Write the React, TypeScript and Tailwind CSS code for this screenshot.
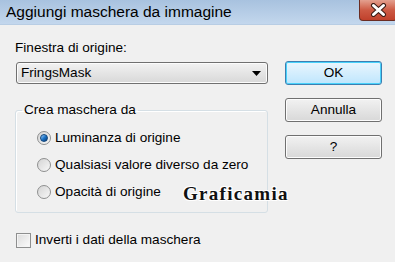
import React from "react";

const font = { fontFamily: '"Liberation Sans", Arial, sans-serif' };

function WinButton({ label, focused }: { label: string; focused?: boolean }) {
  return (
    <button
      className={`flex h-[24px] w-[97px] items-center justify-center rounded-[3px] border text-[13.6px] text-black ${
        focused
          ? "border-[#3c7fb1] bg-gradient-to-b from-[#eaf6fd] to-[#bee6fd] shadow-[inset_0_0_0_1px_#48d2fb]"
          : "border-[#707070] bg-gradient-to-b from-[#f2f2f2] to-[#d8d8d8] shadow-[inset_0_0_0_1px_#fcfcfc]"
      }`}
    >
      {label}
    </button>
  );
}

function Radio({ label, checked }: { label: string; checked?: boolean }) {
  return (
    <div className="flex h-[16px] items-center">
      <span className="flex h-[14px] w-[14px] items-center justify-center rounded-full border border-[#8e8f8f] bg-gradient-to-br from-[#d4d4d4] to-[#f8f8f8]">
        {checked && (
          <span className="h-[8px] w-[8px] rounded-full border border-[#12467a] bg-gradient-to-br from-[#9ed4ff] via-[#1b75c8] to-[#0b3a78]" />
        )}
      </span>
      <span className="ml-[4px] text-[13.6px] leading-[16px] text-black">{label}</span>
    </div>
  );
}

export default function App() {
  return (
    <div className="h-[262px] w-[395px] overflow-hidden bg-[#f0f0f0]" style={font}>
      {/* title bar */}
      <div className="flex h-[25px] items-start justify-between bg-gradient-to-b from-[#a8c2df] to-[#c3d7ed] border-b border-[#b8cde4]">
        <span className="ml-[6px] mt-[3px] text-[15.5px] leading-[18px] text-black">
          Aggiungi maschera da immagine
        </span>
        <div className="mr-[-2px] flex h-[21px] w-[38px] items-center justify-center rounded-b-[4px] border border-t-0 border-[#6a2c22] bg-gradient-to-b from-[#e3a08f] via-[#cd5a44] to-[#c0402b]">
          <svg width="17" height="14" viewBox="0 0 17 14">
            <path
              d="M3.5 2.5 L13.5 11.5 M13.5 2.5 L3.5 11.5"
              stroke="#3a1a14"
              strokeWidth="5"
              strokeLinecap="round"
            />
            <path
              d="M3.5 2.5 L13.5 11.5 M13.5 2.5 L3.5 11.5"
              stroke="#ffffff"
              strokeWidth="3"
              strokeLinecap="round"
            />
          </svg>
        </div>
      </div>

      <div className="relative flex">
        {/* left column */}
        <div className="ml-[15px] w-[253px]">
          <div className="mt-[15px] text-[13.6px] leading-[16px] text-black">Finestra di origine:</div>
          <div className="ml-[1px] mt-[6px] flex h-[22px] w-[252px] items-center justify-between rounded-[3px] border border-[#707070] bg-gradient-to-b from-[#f2f2f2] to-[#d8d8d8] shadow-[inset_0_0_0_1px_#fcfcfc]">
            <span className="ml-[4px] text-[13.6px] text-black">FringsMask</span>
            <svg width="9" height="5" viewBox="0 0 9 5" className="mr-[6px]">
              <path d="M0 0 H9 L4.5 5 Z" fill="#000" />
            </svg>
          </div>

          <fieldset className="mt-[18px] h-[111px] rounded-[3px] border border-[#d5dfe5] shadow-[inset_1px_1px_0_#ffffff]">
            <legend className="ml-[6px] px-[2px] text-[13.6px] leading-[16px] text-black">
              Crea maschera da
            </legend>
            <div className="ml-[21px] mt-[12px] flex flex-col gap-[11px]">
              <Radio label="Luminanza di origine" checked />
              <Radio label="Qualsiasi valore diverso da zero" />
              <Radio label="Opacità di origine" />
            </div>
          </fieldset>

          <div className="mt-[19px] flex items-center">
            <span className="ml-[1px] h-[15px] w-[15px] border border-[#8e8f8f] bg-gradient-to-br from-[#dcdcdc] to-[#fbfbfb] shadow-[inset_0_0_0_1px_#f4f4f4]" />
            <span className="ml-[4px] text-[13.6px] leading-[16px] text-black">
              Inverti i dati della maschera
            </span>
          </div>
        </div>

        {/* right column */}
        <div className="ml-[17px] mt-[36px] flex flex-col gap-[13px]">
          <WinButton label="OK" focused />
          <WinButton label="Annulla" />
          <WinButton label="?" />
        </div>

        {/* watermark */}
        <span
          className="absolute left-[183px] top-[159px] text-[19px] font-bold leading-[20px] tracking-[1.3px] text-[#111] [text-shadow:1px_1px_0_#fff,-1px_-1px_0_#fff,1px_-1px_0_#fff,-1px_1px_0_#fff]"
          style={{ fontFamily: '"Liberation Serif", "Times New Roman", serif' }}
        >
          Graficamia
        </span>
      </div>
    </div>
  );
}
